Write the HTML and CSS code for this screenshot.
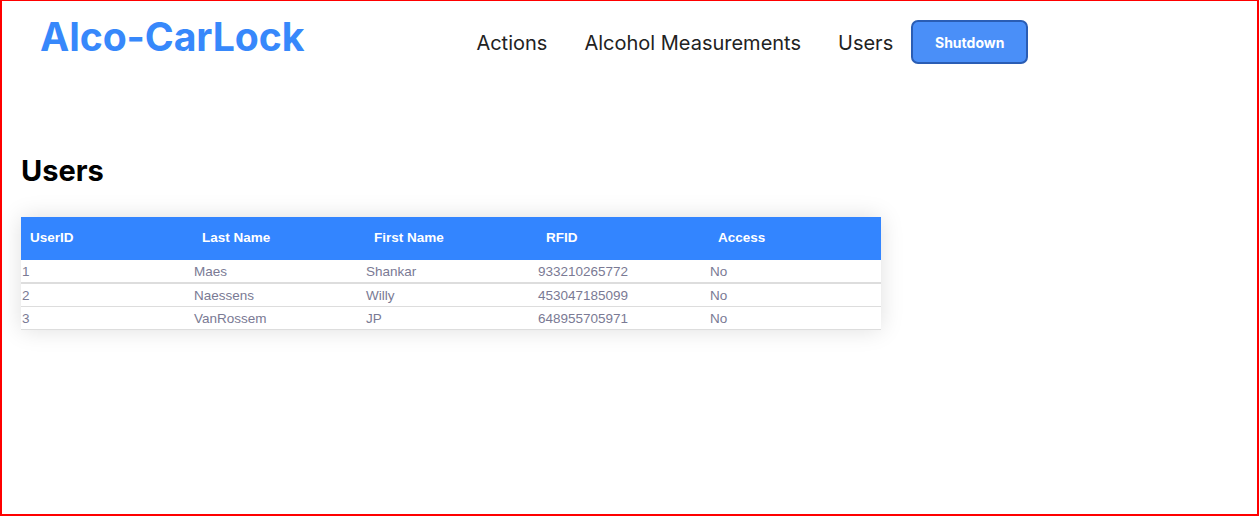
FILE: index.html
```html
<!DOCTYPE html>
<html lang="en">
<head>
<meta charset="utf-8">
<title>Alco-CarLock - Users</title>
<link rel="stylesheet" href="styles.css">
</head>
<body>
<div class="frame">
  <header class="topbar">
    <div class="logo">Alco-CarLock</div>
    <nav class="nav">
      <a class="nav-link" href="#">Actions</a>
      <a class="nav-link" href="#">Alcohol Measurements</a>
      <a class="nav-link" href="#">Users</a>
      <button class="btn-shutdown" type="button">Shutdown</button>
    </nav>
  </header>
  <main class="content">
    <h1 class="title">Users</h1>
    <table class="users-table">
      <thead>
        <tr>
          <th>UserID</th>
          <th>Last Name</th>
          <th>First Name</th>
          <th>RFID</th>
          <th>Access</th>
        </tr>
      </thead>
      <tbody>
        <tr class="first-row"><td>1</td><td>Maes</td><td>Shankar</td><td>933210265772</td><td>No</td></tr>
        <tr><td>2</td><td>Naessens</td><td>Willy</td><td>453047185099</td><td>No</td></tr>
        <tr><td>3</td><td>VanRossem</td><td>JP</td><td>648955705971</td><td>No</td></tr>
      </tbody>
    </table>
  </main>
</div>
</body>
</html>
```

FILE: styles.css
```css
html, body {
  margin: 0;
  padding: 0;
  background: #ffffff;
}
.frame {
  box-sizing: border-box;
  width: 1259px;
  height: 516px;
  border-top: 1px solid #ff0000;
  border-left: 2px solid #ff0000;
  border-right: 2px solid #ff0000;
  border-bottom: 2px solid #ff0000;
  font-family: Inter, "Liberation Sans", sans-serif;
  overflow: hidden;
}
.topbar {
  display: flex;
  align-items: flex-start;
  padding-top: 13px;
  padding-left: 38px;
}
.logo {
  font-family: Inter, sans-serif;
  font-weight: 700;
  font-size: 39.2px;
  line-height: 46px;
  color: #3788fb;
  letter-spacing: -0.1px;
}
.nav {
  display: flex;
  align-items: center;
  margin-left: 172px;
  margin-top: 6px;
  gap: 37px;
}
.nav-link {
  font-family: Inter, sans-serif;
  font-size: 20px;
  line-height: 26px;
  padding-top: 2px;
  color: #222222;
  text-decoration: none;
}
.btn-shutdown {
  margin-left: -19px;
  width: 117px;
  height: 44px;
  background: #4a8ff8;
  border: 2px solid #2a5db4;
  border-radius: 7px;
  color: #ffffff;
  font-family: Inter, sans-serif;
  font-weight: 700;
  font-size: 14px;
}
.content {
  padding: 0 19px;
}
.title {
  margin: 90px 0 29px;
  font-family: Inter, sans-serif;
  font-weight: 700;
  font-size: 29px;
  line-height: 34px;
  color: #000000;
}
.users-table {
  width: 860px;
  border-collapse: collapse;
  table-layout: fixed;
  font-family: "Liberation Sans", Arial, sans-serif;
  font-size: 13.5px;
  box-shadow: 0 0 22px rgba(0, 0, 0, 0.13);
}
.users-table th {
  background: #3385ff;
  color: #ffffff;
  font-weight: 700;
  text-align: left;
  height: 43px;
  padding: 0 0 3px 9px;
  box-sizing: border-box;
}
.users-table td {
  color: #7a7a94;
  height: 22px;
  padding: 0 0 0 1px;
  border-bottom: 1px solid #dddddd;
}
.users-table .first-row td {
  border-bottom: 2px solid #dddddd;
}
```
